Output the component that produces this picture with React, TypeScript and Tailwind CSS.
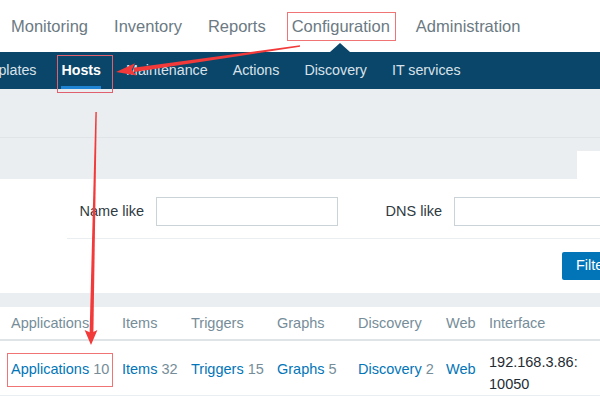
import React from "react";

const topNav = ["Monitoring", "Inventory", "Reports", "Configuration", "Administration"];
const subNav = ["Templates", "Hosts", "Maintenance", "Actions", "Discovery", "IT services"];

const columns = ["Applications", "Items", "Triggers", "Graphs", "Discovery", "Web", "Interface"];
const links = [
    { name: "Applications", count: "10", boxed: true },
    { name: "Items", count: "32" },
    { name: "Triggers", count: "15" },
    { name: "Graphs", count: "5" },
    { name: "Discovery", count: "2" },
    { name: "Web" },
];

function Arrows() {
    return (
        <svg
            className="absolute inset-0 pointer-events-none"
            width="600"
            height="400"
            viewBox="0 0 600 400"
        >
            {/* Configuration -> Hosts */}
            <polygon points="300,45.2 300,46.8 134.4,72 133.4,67.8" fill="#f23a3a" />
            <polygon points="116,72 135,63.3 131.8,69.7 136.7,75.4" fill="#f23a3a" />
            {/* Hosts -> Applications */}
            <polygon points="95.4,112 96.8,112 93.4,333 89.6,333" fill="#f23a3a" />
            <polygon points="91,345 84.6,330 91.3,333 97.4,330" fill="#f23a3a" />
        </svg>
    );
}

export default function App() {
    return (
        <div className="relative w-[600px] h-[400px] overflow-hidden bg-white font-['Liberation_Sans',Arial,sans-serif]">
            {/* top menu */}
            <div className="relative h-[52px] flex items-center gap-[26px] pl-[11px] text-[16.5px] text-[#6b7a83] whitespace-nowrap">
                {topNav.map((item) => (
                    <span key={item} className="relative leading-[19px]">
                        {item}
                        {item === "Configuration" && (
                            <span className="absolute -left-[5px] -right-[6px] -top-[5px] -bottom-[5px] border border-[#f07474]" />
                        )}
                    </span>
                ))}
                <div className="absolute left-[330px] bottom-0 w-0 h-0 border-x-[10px] border-x-transparent border-b-[9px] border-b-[#0a466a]" />
            </div>

            {/* sub menu */}
            <div className="h-[37px] pt-[1px] bg-[#0a466a] flex gap-[25px] text-[14.25px] text-[#d9e2e9] whitespace-nowrap">
                {subNav.map((item, i) => (
                    <span
                        key={item}
                        className={`relative flex items-center shrink-0 ${i === 0 ? "-ml-[28.5px]" : ""} ${
                            item === "Hosts" ? "font-bold text-white" : ""
                        }`}
                    >
                        {item}
                        {item === "Hosts" && (
                            <>
                                <span className="absolute left-0 right-0 bottom-0 h-[3px] bg-[#1f84d3]" />
                                <span className="absolute -left-[4px] -right-[12px] top-[2px] -bottom-[4px] border border-[#e0606e] z-10" />
                            </>
                        )}
                    </span>
                ))}
            </div>

            {/* page header area */}
            <div className="h-[49px] bg-[#ebeef0] border-b border-[#dfe4e7]" />
            <div className="h-[41px] bg-[#ebeef0] flex justify-end items-end">
                <div className="w-[23px] h-[28px] bg-white" />
            </div>

            {/* filter */}
            <div className="h-[114px] bg-white pt-[18px] text-[14.5px] text-[#2f3b42]">
                <div className="flex items-center whitespace-nowrap">
                    <span className="w-[144px] text-right shrink-0">Name like</span>
                    <div className="ml-[12px] w-[182px] h-[29px] border border-[#c9d3d8] shrink-0" />
                    <span className="w-[104px] text-right shrink-0">DNS like</span>
                    <div className="ml-[12px] w-[180px] h-[29px] border border-[#c9d3d8] shrink-0" />
                </div>
                <div className="ml-[67px] mt-[12px] border-t border-[#ebeef0]" />
                <div className="flex pl-[562px] mt-[13px]">
                    <button className="h-[28px] px-[14px] bg-[#0275b8] text-white rounded-[2px] shrink-0 text-[14.5px]">
                        Filter
                    </button>
                </div>
            </div>

            <div className="h-[14px] bg-[#ebeef0]" />

            {/* table */}
            <div className="grid grid-cols-[111px_69px_86px_81px_88px_43px_1fr] pl-[11px] h-[34px] pt-[2px] items-center text-[14.5px] text-[#768d99] border-b-2 border-[#dfe4e7] whitespace-nowrap">
                {columns.map((c) => (
                    <span key={c}>{c}</span>
                ))}
            </div>
            <div className="grid grid-cols-[111px_69px_86px_81px_88px_43px_1fr] pl-[11px] h-[55px] pt-[4px] items-center text-[14.5px] border-b border-[#ebeef0] whitespace-nowrap">
                {links.map((l) => (
                    <span key={l.name}>
                        <span
                            className={
                                l.boxed
                                    ? "inline-block -ml-[4px] pl-[3px] pr-[3px] py-[5px] border border-[#f07474]"
                                    : ""
                            }
                        >
                            <span className="text-[#0275b8]">{l.name}</span>
                            {l.count && <span className="text-[#768d99]"> {l.count}</span>}
                        </span>
                    </span>
                ))}
                <div className="mt-[6px] leading-[22px] text-[#1f2c33]">
                    <div>192.168.3.86:</div>
                    <div>10050</div>
                </div>
            </div>

            <Arrows />
        </div>
    );
}
